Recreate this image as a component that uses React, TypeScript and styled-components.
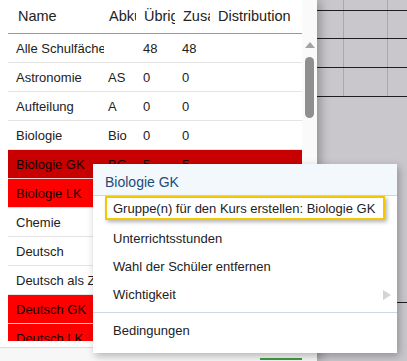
import { FC } from 'react'
import styled, { createGlobalStyle } from 'styled-components'

const GlobalStyle = createGlobalStyle`
  body {
    margin: 0;
    font-family: 'Liberation Sans', Arial, sans-serif;
    overflow: hidden;
  }
`
const Page = styled.div`
  position: relative;
  display: flex;
  width: 407px;
  height: 361px;
  overflow: hidden;
  background: #c9c7cc;
`
const Panel = styled.div`
  position: relative;
  z-index: 1;
  width: 317px;
  flex-shrink: 0;
  display: flex;
  flex-direction: column;
  background: #ffffff;
  box-shadow: 3px 0 10px rgba(0, 0, 0, 0.3);
`
const TableArea = styled.div`
  display: flex;
  flex-shrink: 0;
  height: 341px;
  overflow: hidden;
`
const Table = styled.div`
  width: 294px;
  margin-left: 8px;
`
const cols = '96px 35px 39px 35px 1fr'
const HeaderRow = styled.div`
  display: grid;
  grid-template-columns: ${cols};
  height: 34px;
  box-sizing: border-box;
  border-bottom: 1px solid #8d9dac;
  align-items: center;
  font-size: 14.5px;
  color: #222222;
`
const HeaderCell = styled.div<{ $first?: boolean }>`
  overflow: hidden;
  white-space: nowrap;
  margin-right: 3px;
  padding: 0 0 1px ${(p) => (p.$first ? '10px' : '5px')};
`
const Row = styled.div<{ $tone?: 'dark' | 'red' }>`
  display: grid;
  grid-template-columns: ${cols};
  height: 29px;
  box-sizing: border-box;
  align-items: center;
  font-size: 13px;
  color: ${(p) => (p.$tone ? '#140000' : '#222222')};
  background: ${(p) =>
    p.$tone === 'dark' ? '#c80000' : p.$tone === 'red' ? '#ff0000' : '#ffffff'};
  border-bottom: 1px solid ${(p) => (p.$tone ? '#f4d0d0' : '#e4e4e4')};
`
const Cell = styled.div<{ $first?: boolean }>`
  overflow: hidden;
  white-space: nowrap;
  padding-left: ${(p) => (p.$first ? '8px' : '4px')};
`
const ScrollTrack = styled.div`
  width: 15px;
  background: #fafafa;
  display: flex;
  flex-direction: column;
  align-items: center;
  padding-top: 42px;
  box-sizing: border-box;
`
const ScrollArrow = styled.div`
  width: 0;
  height: 0;
  border-left: 5px solid transparent;
  border-right: 5px solid transparent;
  border-bottom: 6px solid #a3a3a3;
`
const ScrollThumb = styled.div`
  width: 9px;
  height: 61px;
  margin-top: 9px;
  border-radius: 5px;
  background: #8f8f8f;
`
const Footer = styled.div`
  flex: 1;
  min-height: 0;
  overflow: hidden;
  margin-top: 6px;
  border-top: 1px solid #dcdcdc;
  background: #f7f7f7;
  padding: 10px 0 0 260px;
`
const GreenButton = styled.div`
  width: 42px;
  height: 20px;
  border-top: 2px solid #3d9b45;
  background: #f2f8f2;
`
const Canvas = styled.div`
  flex: 1;
  display: flex;
  flex-direction: column;
`
const CanvasRow = styled.div<{ $h: number; $split?: boolean }>`
  display: grid;
  grid-template-columns: ${(p) => (p.$split ? '26px 44px 1fr' : '1fr')};
  height: ${(p) => p.$h}px;
  flex-shrink: 0;
  box-sizing: border-box;
  border-bottom: 1px solid #1e1e1e;
`
const CanvasCell = styled.div<{ $line?: boolean }>`
  border-left: ${(p) => (p.$line ? '1px solid #a9a7ac' : 'none')};
`
const Menu = styled.div`
  position: absolute;
  z-index: 2;
  left: 93px;
  top: 164px;
  width: 304px;
  height: 189px;
  box-sizing: border-box;
  background: #ffffff;
  box-shadow: 2px 3px 8px rgba(0, 0, 0, 0.28);
  font-size: 13px;
  color: #222222;
`
const MenuHeader = styled.div`
  height: 32px;
  box-sizing: border-box;
  padding: 4px 0 0 12px;
  display: flex;
  align-items: center;
  background: #f3f8fd;
  border-bottom: 1px solid #c9d9e8;
  color: #1d4b79;
  font-size: 14px;
`
const MenuItem = styled.div`
  position: relative;
  height: 28px;
  display: flex;
  align-items: center;
  padding-left: 20px;
  white-space: nowrap;
`
const HighlightRow = styled.div`
  height: 28px;
  padding-left: 12px;
`
const Highlight = styled.div`
  width: 280px;
  height: 24px;
  box-sizing: border-box;
  display: flex;
  align-items: center;
  padding-left: 6px;
  border: 2px solid #f4c800;
  box-shadow: 2px 2px 4px rgba(0, 0, 0, 0.3);
  white-space: nowrap;
`
const SubArrow = styled.div`
  position: absolute;
  right: 6px;
  top: 10px;
  width: 0;
  height: 0;
  border-top: 5px solid transparent;
  border-bottom: 5px solid transparent;
  border-left: 8px solid #d4d4d4;
`
const Separator = styled.div`
  height: 1px;
  margin: 4px 0 3px;
  background: #c9d9e8;
`

interface Subject {
  name: string
  abk: string
  ubr: string
  zus: string
  tone?: 'dark' | 'red'
}

const subjects: Subject[] = [
  { name: 'Alle Schulfächer', abk: '', ubr: '48', zus: '48' },
  { name: 'Astronomie', abk: 'AS', ubr: '0', zus: '0' },
  { name: 'Aufteilung', abk: 'A', ubr: '0', zus: '0' },
  { name: 'Biologie', abk: 'Bio', ubr: '0', zus: '0' },
  { name: 'Biologie GK', abk: 'BG', ubr: '5', zus: '5', tone: 'dark' },
  { name: 'Biologie LK', abk: 'BL', ubr: '5', zus: '5', tone: 'red' },
  { name: 'Chemie', abk: 'Ch', ubr: '0', zus: '0' },
  { name: 'Deutsch', abk: 'D', ubr: '0', zus: '0' },
  { name: 'Deutsch als Zweitsprache', abk: 'DaZ', ubr: '0', zus: '0' },
  { name: 'Deutsch GK', abk: 'DG', ubr: '5', zus: '5', tone: 'red' },
  { name: 'Deutsch LK', abk: 'DL', ubr: '5', zus: '5', tone: 'red' },
]

const App: FC = () => {
  return (
    <>
      <GlobalStyle />
      <Page>
        <Panel>
          <TableArea>
            <Table>
              <HeaderRow>
                <HeaderCell $first>Name</HeaderCell>
                <HeaderCell>Abkürzung</HeaderCell>
                <HeaderCell>Übrig</HeaderCell>
                <HeaderCell>Zusammen</HeaderCell>
                <HeaderCell>Distribution</HeaderCell>
              </HeaderRow>
              {subjects.map((s) => (
                <Row key={s.name} $tone={s.tone}>
                  <Cell $first>{s.name}</Cell>
                  <Cell>{s.abk}</Cell>
                  <Cell>{s.ubr}</Cell>
                  <Cell>{s.zus}</Cell>
                  <Cell />
                </Row>
              ))}
            </Table>
            <ScrollTrack>
              <ScrollArrow />
              <ScrollThumb />
            </ScrollTrack>
          </TableArea>
          <Footer>
            <GreenButton />
          </Footer>
        </Panel>
        <Canvas>
          {[11, 28, 29, 29].map((h, i) => (
            <CanvasRow key={i} $h={h} $split>
              <CanvasCell />
              <CanvasCell $line />
              <CanvasCell $line />
            </CanvasRow>
          ))}
          <CanvasRow $h={206}>
            <CanvasCell />
          </CanvasRow>
        </Canvas>
        <Menu>
          <MenuHeader>Biologie GK</MenuHeader>
          <HighlightRow>
            <Highlight>Gruppe(n) für den Kurs erstellen: Biologie GK</Highlight>
          </HighlightRow>
          <MenuItem>Unterrichtsstunden</MenuItem>
          <MenuItem>Wahl der Schüler entfernen</MenuItem>
          <MenuItem>
            Wichtigkeit
            <SubArrow />
          </MenuItem>
          <Separator />
          <MenuItem>Bedingungen</MenuItem>
        </Menu>
      </Page>
    </>
  )
}
export default App
